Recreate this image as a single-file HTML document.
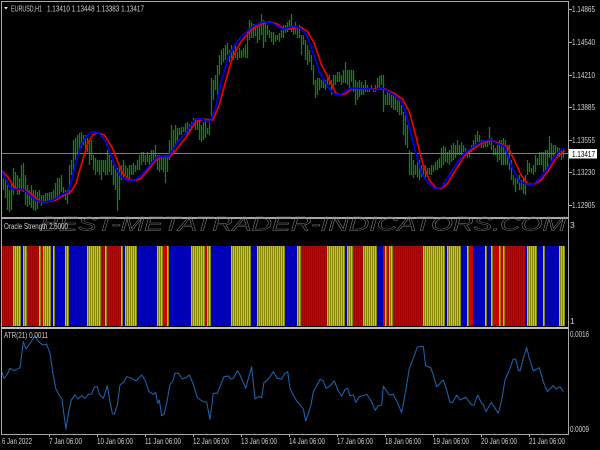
<!DOCTYPE html>
<html>
<head>
<meta charset="utf-8">
<style>
html,body{margin:0;padding:0;background:#000;width:600px;height:450px;overflow:hidden}
svg{display:block;filter:blur(.3px)}
text{font-family:"Liberation Sans",sans-serif;font-size:8.5px;fill:#cfcfcf}
</style>
</head>
<body>
<svg width="600" height="450" viewBox="0 0 600 450" xmlns="http://www.w3.org/2000/svg">
<defs>
<pattern id="st" width="2" height="1" patternUnits="userSpaceOnUse"><rect width="1" height="1" fill="#000" opacity=".34"/></pattern>
<pattern id="st2" width="2" height="1" patternUnits="userSpaceOnUse"><rect width="1" height="1" fill="#000" opacity=".2"/></pattern>
</defs>
<rect width="600" height="450" fill="#000"/>

<!-- green bars -->
<path fill="none" stroke="#078a0a" stroke-width="1.25" d="M3.5 178V190M5.5 180V198M7.5 185V210M9.5 190V212M11.5 182V210M13.5 168V195M15.5 172V190M17.5 175V195M19.5 178V195M21.5 165V190M23.5 163V192M25.5 175V205M27.5 185V207M29.5 190V205M31.5 185V208M33.5 190V210M35.5 190V211M37.5 192V209M39.5 190V203M41.5 195V206M43.5 195V203M45.5 193V203M47.5 193V201M49.5 192V200M51.5 192V201M53.5 190V200M55.5 183V198M57.5 178V198M59.5 178V195M61.5 175V192M63.5 187V197M65.5 190V200M67.5 190V204M69.5 165V195M71.5 160V175M73.5 140V170M75.5 138V160M77.5 135V155M79.5 133V150M81.5 132V148M83.5 135V145M85.5 135V150M87.5 138V152M89.5 140V165M91.5 140V160M93.5 155V170M95.5 158V175M97.5 160V172M99.5 160V175M101.5 160V180M103.5 160V172M105.5 160V175M107.5 150V175M109.5 155V172M111.5 160V175M113.5 165V185M115.5 168V190M117.5 168V211M119.5 165V200M121.5 165V180M123.5 160V178M125.5 165V175M127.5 168V178M129.5 165V178M131.5 165V175M133.5 163V175M135.5 165V172M137.5 160V170M139.5 155V170M141.5 152V165M143.5 152V162M145.5 155V165M147.5 152V162M149.5 155V168M151.5 150V165M153.5 150V162M155.5 145V162M157.5 155V170M159.5 155V172M161.5 158V170M163.5 158V172M165.5 155V183M167.5 155V172M169.5 140V160M171.5 125V155M173.5 130V152M175.5 125V145M177.5 128V142M179.5 128V135M181.5 127V135M183.5 127V132M185.5 123V135M187.5 122V133M189.5 124V132M191.5 122V130M193.5 118V125M195.5 118V130M197.5 120V130M199.5 120V140M201.5 125V142M203.5 122V140M205.5 118V138M207.5 128V134M209.5 120V135M211.5 78V120M213.5 80V100M215.5 75V90M217.5 65V95M219.5 55V75M221.5 50V65M223.5 48V62M225.5 45V60M227.5 43V55M229.5 50V62M231.5 45V58M233.5 50V60M235.5 45V58M237.5 52V60M239.5 48V58M241.5 50V58M243.5 48V57M245.5 45V58M247.5 32V58M249.5 20V40M251.5 22V38M253.5 24V38M255.5 25V36M257.5 27V43M259.5 22V40M261.5 14V35M263.5 20V48M265.5 22V42M267.5 25V35M269.5 30V38M271.5 32V42M273.5 32V45M275.5 35V42M277.5 35V40M279.5 33V42M281.5 30V38M283.5 25V38M285.5 25V33M287.5 22V32M289.5 20V30M291.5 14V32M293.5 25V35M295.5 22V34M297.5 28V38M299.5 25V38M301.5 35V55M303.5 35V45M305.5 40V60M307.5 45V65M309.5 50V62M311.5 55V70M313.5 65V85M315.5 80V98M317.5 78V95M319.5 78V90M321.5 80V88M323.5 78V88M325.5 80V90M327.5 78V88M329.5 75V85M331.5 80V95M333.5 75V90M335.5 75V85M337.5 72V82M339.5 72V82M341.5 75V85M343.5 70V83M345.5 62V83M347.5 70V85M349.5 70V88M351.5 70V82M353.5 70V92M355.5 80V105M357.5 82V100M359.5 80V97M361.5 82V95M363.5 85V95M365.5 80V92M367.5 85V92M369.5 88V92M371.5 85V90M373.5 88V92M375.5 85V92M377.5 78V88M379.5 76V88M381.5 75V85M383.5 75V112M385.5 95V105M387.5 92V105M389.5 92V105M391.5 95V108M393.5 95V110M395.5 97V110M397.5 100V112M399.5 100V115M401.5 105V115M403.5 112V135M405.5 115V145M407.5 125V148M409.5 150V175M411.5 152V175M413.5 160V178M415.5 165V175M417.5 162V177M419.5 160V180M421.5 165V177M423.5 165V175M425.5 165V180M427.5 168V177M429.5 168V175M431.5 165V175M433.5 165V172M435.5 162V170M437.5 160V170M439.5 158V168M441.5 148V168M443.5 146V165M445.5 147V162M447.5 152V163M449.5 150V165M451.5 145V162M453.5 143V160M455.5 145V158M457.5 140V155M459.5 145V155M461.5 142V155M463.5 145V152M465.5 148V155M467.5 152V158M469.5 150V157M471.5 145V152M473.5 140V150M475.5 135V148M477.5 131V142M479.5 135V145M481.5 140V148M483.5 140V148M485.5 140V147M487.5 140V147M489.5 127V145M491.5 138V150M493.5 145V155M495.5 148V155M497.5 145V162M499.5 140V160M501.5 140V165M503.5 138V165M505.5 140V165M507.5 145V165M509.5 145V170M511.5 160V180M513.5 175V185M515.5 178V192M517.5 178V184M519.5 175V190M521.5 180V190M523.5 178V194M525.5 175V195M527.5 160V175M529.5 163V172M531.5 168V173M533.5 165V175M535.5 155V172M537.5 158V165M539.5 152V165M541.5 152V165M543.5 152V172M545.5 150V170M547.5 150V168M549.5 136V158M551.5 143V162M553.5 145V158M555.5 145V155M557.5 147V158M559.5 148V157M561.5 150V160M563.5 150V158"/>

<!-- price line -->
<path shape-rendering="crispEdges" d="M2 153.5H568" stroke="#7e7e7e" stroke-width="1"/>

<!-- moving averages -->
<g fill="none" stroke-linejoin="round" stroke-linecap="round" stroke-width="5" transform="scale(.33333)">
<polyline transform="translate(3 0)" stroke="#f00000" points="5,515 20,530 35,555 50,570 70,570 90,580 115,603 135,606 165,600 190,585 210,575 225,550 245,480 260,430 275,405 290,398 310,405 335,445 350,485 365,520 385,538 405,541 420,535 445,505 465,480 485,470 505,472 525,450 555,412 585,365 605,358 635,360 655,315 675,240 695,170 720,125 750,90 780,72 805,65 830,72 850,88 880,84 900,82 920,95 940,130 960,190 985,240 1005,280 1020,285 1035,280 1050,268 1100,266 1130,268 1150,266 1180,280 1205,298 1225,335 1245,410 1265,490 1285,540 1305,563 1320,566 1340,550 1370,500 1395,462 1420,445 1445,428 1470,420 1500,432 1520,440 1540,480 1560,525 1580,550 1600,552 1620,540 1640,515 1665,475 1690,452"/>
<polyline stroke="#0000f5" points="5,515 15,530 28,560 40,568 70,568 90,585 110,603 135,606 160,600 185,585 205,575 215,540 230,480 245,430 262,405 278,396 295,398 315,420 335,470 350,510 365,532 385,541 405,540 425,525 450,495 470,472 490,468 505,470 530,430 560,395 585,358 600,356 630,365 645,330 665,240 685,170 710,125 740,95 760,78 790,65 815,68 850,88 880,78 900,85 920,105 940,160 960,220 985,262 1000,280 1020,285 1035,275 1050,265 1100,266 1130,270 1145,263 1180,283 1205,305 1220,350 1245,450 1265,520 1285,550 1305,565 1325,562 1345,530 1370,490 1395,458 1420,440 1445,425 1470,418 1490,430 1515,440 1535,500 1560,545 1580,552 1600,552 1620,535 1640,510 1665,465 1690,445"/>
</g>

<!-- oracle strength band -->
<g shape-rendering="crispEdges">
<rect x="2" y="246" width="563" height="80" fill="#cccc00"/>
<rect x="2" y="246" width="563" height="80" fill="url(#st)"/>
<path fill="#cc0000" d="M2 246H13V326H2ZM27 246H39V326H27ZM41 246H43V326H41ZM101 246H105V326H101ZM107 246H121V326H107ZM163 246H167V326H163ZM205 246H207V326H205ZM301 246H327V326H301ZM353 246H363V326H353ZM383 246H385V326H383ZM387 246H389V326H387ZM393 246H423V326H393ZM469 246H473V326H469ZM493 246H499V326H493ZM501 246H503V326H501ZM505 246H525V326H505Z"/>
<path fill="#0000b8" d="M21 246H23V326H21ZM51 246H53V326H51ZM55 246H65V326H55ZM69 246H87V326H69ZM123 246H125V326H123ZM137 246H157V326H137ZM169 246H191V326H169ZM211 246H231V326H211ZM251 246H257V326H251ZM285 246H297V326H285ZM345 246H347V326H345ZM377 246H383V326H377ZM445 246H447V326H445ZM461 246H467V326H461ZM473 246H485V326H473ZM487 246H491V326H487ZM525 246H527V326H525ZM537 246H543V326H537ZM545 246H559V326H545Z"/>
<path fill="url(#st2)" d="M2 246H13V326H2ZM27 246H39V326H27ZM101 246H105V326H101ZM107 246H121V326H107ZM301 246H327V326H301ZM353 246H363V326H353ZM393 246H423V326H393ZM505 246H525V326H505Z"/>
</g>

<!-- ATR -->
<g fill="none" stroke="#1f62a8" stroke-width="3.2" stroke-linejoin="round" transform="translate(0 325) scale(.33333)">
<polyline points="5,140 12,160 22,148 30,130 42,137 60,128 70,50 78,72 92,52 105,33 118,52 128,60 140,58 150,85 158,140 167,190 178,212 186,222 192,270 198,312 206,260 214,225 225,210 233,222 245,212 255,220 265,208 275,207 283,186 292,185 298,208 310,220 322,182 330,230 337,265 343,268 352,240 360,180 372,170 380,155 395,160 408,168 425,150 435,165 447,200 460,208 467,202 473,235 478,225 485,272 492,268 500,235 510,178 518,170 525,145 535,145 547,162 558,158 568,150 580,178 592,218 606,228 620,232 630,283 640,205 652,205 662,180 672,155 685,153 692,162 700,160 712,137 720,150 737,190 755,125 765,222 775,215 785,218 792,172 800,168 808,158 820,140 832,160 845,162 855,145 863,140 870,190 880,210 890,228 900,238 910,252 917,288 925,265 933,240 940,200 950,182 960,163 970,168 978,190 990,183 1003,168 1015,198 1025,213 1035,193 1043,190 1050,212 1060,210 1067,232 1078,215 1090,212 1100,208 1112,225 1126,256 1133,243 1145,240 1150,183 1168,210 1180,208 1192,232 1205,263 1215,210 1228,130 1240,100 1252,66 1270,64 1277,122 1292,128 1300,150 1310,185 1320,175 1330,165 1340,195 1350,232 1358,232 1370,210 1380,225 1397,217 1415,240 1422,240 1433,210 1445,235 1450,238 1458,260 1474,232 1495,265 1505,225 1515,165 1530,130 1540,102 1547,103 1555,135 1560,138 1570,100 1580,68 1588,100 1600,138 1618,128 1630,170 1642,200 1660,182 1668,192 1680,185 1690,200"/>
</g>

<!-- frame -->
<g shape-rendering="crispEdges" fill="none">
<path stroke="#a8a8a8" d="M1.5 1.5H568.5V434.5H1.5Z"/>
<path stroke="#a8a8a8" stroke-width="2" d="M2 218H568"/>
<path stroke="#c0c0c0" stroke-width="2" d="M2 328H568"/>
<path stroke="#a8a8a8" d="M568 9.5H572M568 42.5H572M568 75.5H572M568 107.5H572M568 140.5H572M568 172.5H572M568 205.5H572M49.5 434V437M97.5 434V437M145.5 434V437M193.5 434V437M241.5 434V437M289.5 434V437M337.5 434V437M385.5 434V437M433.5 434V437M481.5 434V437M529.5 434V437"/>
</g>

<!-- watermark -->
<text x="40" y="230.5" textLength="526" lengthAdjust="spacingAndGlyphs" style="font-size:19px;font-style:italic;fill:none;stroke:#7c7c7c;stroke-width:.42">BEST-METATRADER-INDICATORS.COM</text>

<!-- chart header -->
<path d="M4 7H8L6 9.5Z" fill="#ddd"/>
<text x="11" y="11.5" textLength="31" lengthAdjust="spacingAndGlyphs">EURUSD,H1</text>
<text x="47" y="11.5" textLength="97" lengthAdjust="spacingAndGlyphs">1.13410 1.13448 1.13383 1.13417</text>
<text x="4" y="229" textLength="64" lengthAdjust="spacingAndGlyphs">Oracle Strength 2.5000</text>
<text x="4" y="338" textLength="44" lengthAdjust="spacingAndGlyphs">ATR(21) 0.0011</text>

<!-- price axis -->
<text x="572" y="12" textLength="23" lengthAdjust="spacingAndGlyphs">1.14865</text>
<text x="572" y="45" textLength="23" lengthAdjust="spacingAndGlyphs">1.14540</text>
<text x="572" y="78" textLength="23" lengthAdjust="spacingAndGlyphs">1.14210</text>
<text x="572" y="110" textLength="23" lengthAdjust="spacingAndGlyphs">1.13885</text>
<text x="572" y="143" textLength="23" lengthAdjust="spacingAndGlyphs">1.13555</text>
<rect x="569" y="149" width="28" height="9.5" fill="#fff"/>
<text x="572" y="157" textLength="23" lengthAdjust="spacingAndGlyphs" style="fill:#000">1.13417</text>
<text x="572" y="175" textLength="23" lengthAdjust="spacingAndGlyphs">1.13230</text>
<text x="572" y="208" textLength="23" lengthAdjust="spacingAndGlyphs">1.12905</text>
<text x="570" y="228">3</text>
<text x="570" y="324">1</text>
<text x="570" y="337" textLength="19" lengthAdjust="spacingAndGlyphs">0.0016</text>
<text x="570" y="432" textLength="19" lengthAdjust="spacingAndGlyphs">0.0009</text>

<!-- time axis -->
<text x="2" y="444" textLength="30" lengthAdjust="spacingAndGlyphs">6 Jan 2022</text>
<text x="49" y="444" textLength="33" lengthAdjust="spacingAndGlyphs">7 Jan 06:00</text>
<text x="97" y="444" textLength="36" lengthAdjust="spacingAndGlyphs">10 Jan 06:00</text>
<text x="145" y="444" textLength="36" lengthAdjust="spacingAndGlyphs">11 Jan 06:00</text>
<text x="193" y="444" textLength="36" lengthAdjust="spacingAndGlyphs">12 Jan 06:00</text>
<text x="241" y="444" textLength="36" lengthAdjust="spacingAndGlyphs">13 Jan 06:00</text>
<text x="289" y="444" textLength="36" lengthAdjust="spacingAndGlyphs">14 Jan 06:00</text>
<text x="337" y="444" textLength="36" lengthAdjust="spacingAndGlyphs">17 Jan 06:00</text>
<text x="385" y="444" textLength="36" lengthAdjust="spacingAndGlyphs">18 Jan 06:00</text>
<text x="433" y="444" textLength="36" lengthAdjust="spacingAndGlyphs">19 Jan 06:00</text>
<text x="481" y="444" textLength="36" lengthAdjust="spacingAndGlyphs">20 Jan 06:00</text>
<text x="529" y="444" textLength="36" lengthAdjust="spacingAndGlyphs">21 Jan 06:00</text>
</svg>
</body>
</html>
